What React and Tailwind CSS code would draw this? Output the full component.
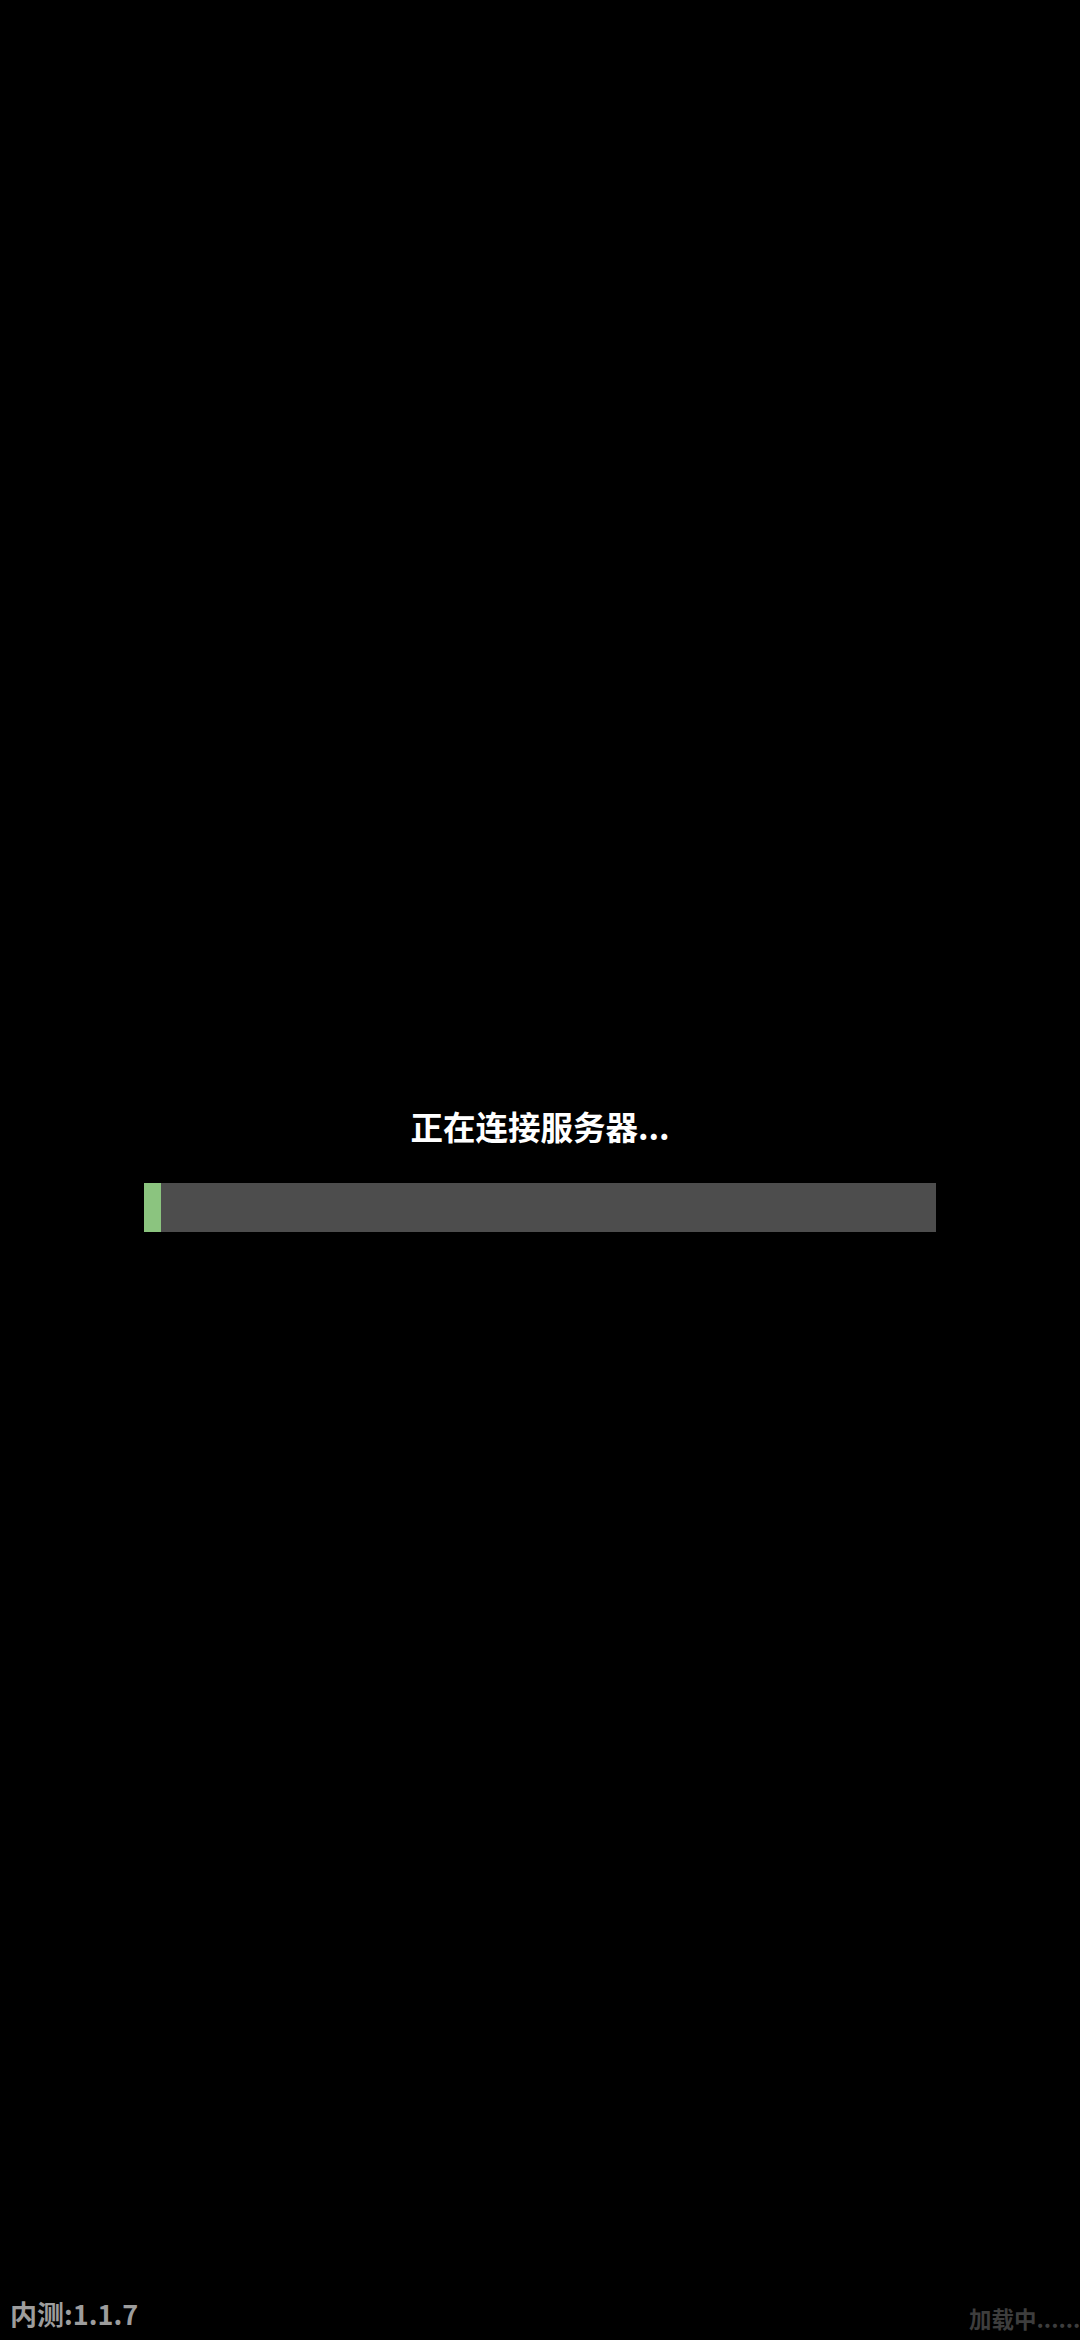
import React from "react";

const font = { fontFamily: '"Noto Sans CJK SC", "Noto Sans", sans-serif' };

const App = () => {
  const progress = 2.2;
  return (
    <div
      className="relative w-[1080px] h-[2340px] bg-black overflow-hidden flex flex-col items-center justify-center"
      style={font}
    >
      {/* Loading block */}
      <div className="flex flex-col items-center w-[792px] mt-[1px]">
        <div className="text-white font-bold text-[32.5px] leading-[32px]">
          正在连接服务器...
        </div>
        <div className="mt-[41px] w-full h-[49px] bg-[#4d4d4d]">
          <div
            className="h-full bg-[#8bc47f]"
            style={{ width: `${progress}%` }}
          />
        </div>
      </div>

      {/* Version */}
      <div className="absolute left-[10px] bottom-[13px] text-[#9d9d9d] font-bold text-[27px] leading-[27px]">
        内测:1.1.7
      </div>

      {/* Status */}
      <div className="absolute left-[969px] bottom-[10px] whitespace-nowrap text-[#3d3d3d] font-bold text-[22.5px] leading-[23px]">
        加载中.........
      </div>
    </div>
  );
};

export default App;
